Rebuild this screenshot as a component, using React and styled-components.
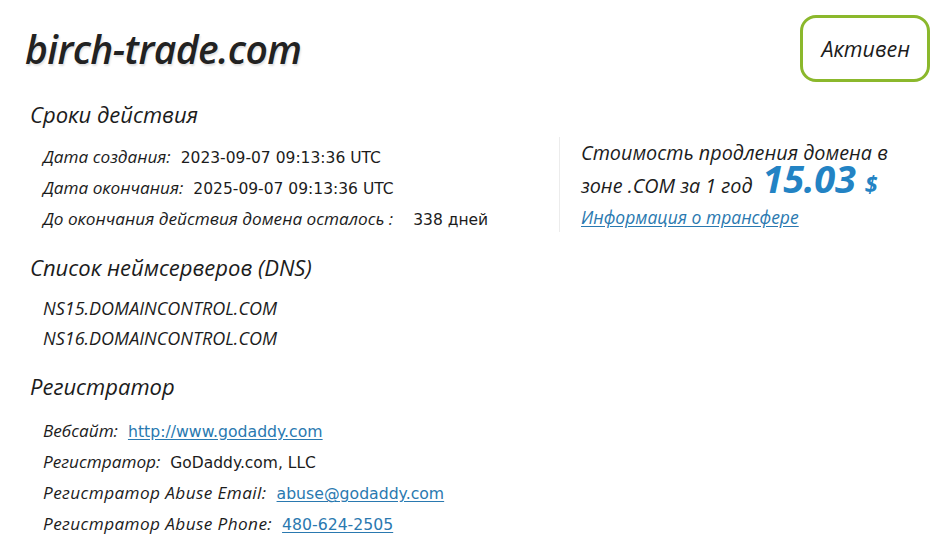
import React from "react";
import styled, { createGlobalStyle } from "styled-components";

const GlobalStyle = createGlobalStyle`
  html, body {
    margin: 0;
    padding: 0;
    background: #fff;
  }
  body {
    font-family: "Open Sans", "Noto Sans", sans-serif;
    color: #1c1c1c;
  }
`;

const Page = styled.div`
  width: 943px;
  height: 556px;
  box-sizing: border-box;
  padding: 15px 13px 0 25px;
  overflow: hidden;
`;

const Header = styled.header`
  display: flex;
  justify-content: space-between;
  align-items: center;
`;

const Title = styled.h1`
  margin: 0;
  font-size: 39px;
  line-height: 46px;
  font-style: italic;
  font-weight: 600;
  color: #222;
  letter-spacing: -0.6px;
  text-shadow: 1px 2px 2px rgba(0, 0, 0, 0.12);
`;

const Status = styled.div`
  box-sizing: border-box;
  height: 67px;
  padding: 0 17px 0 18px;
  display: flex;
  align-items: center;
  border: 3px solid #8bb82c;
  border-radius: 16px;
  font-size: 21.5px;
  font-style: italic;
  color: #1c1c1c;
`;

const TopRow = styled.div`
  display: flex;
  align-items: flex-start;
`;

const Section = styled.section`
  padding-left: 5px;
  margin-top: ${(p) => p.$top}px;
  width: ${(p) => (p.$wide ? "529px" : "auto")};
`;

const SectionTitle = styled.h2`
  margin: 0;
  font-size: 22px;
  line-height: 30px;
  font-style: italic;
  font-weight: 400;
  color: #1c1c1c;
`;

const List = styled.div`
  margin-top: ${(p) => p.$gap}px;
  padding-left: 13px;
`;

const Row = styled.div`
  display: flex;
  align-items: baseline;
  height: 31px;
  line-height: 31px;
  white-space: nowrap;
`;

const Label = styled.span`
  font-size: 17.2px;
  font-style: italic;
  margin-right: ${(p) => p.$gap || 10}px;
  letter-spacing: ${(p) => (p.$latin ? "0.4px" : "0")};
`;

const Value = styled.span`
  font-family: "DejaVu Sans", "Open Sans", sans-serif;
  font-size: 15.5px;
`;

const Server = styled.div`
  font-size: 18px;
  line-height: 30px;
  font-style: italic;
`;

const Anchor = styled.a`
  font-family: "DejaVu Sans", "Open Sans", sans-serif;
  font-size: 15.7px;
  color: #2a79b0;
  text-decoration: underline;
  text-underline-offset: 2px;
`;

const Aside = styled.aside`
  margin-top: 55px;
  height: 95px;
  border-left: 1px solid #ececec;
  padding: 0 0 0 21px;
  font-style: italic;
  font-size: 19.8px;
  line-height: 31px;
`;

const PriceLine = styled.div`
  display: flex;
  align-items: baseline;
  height: 29px;
  line-height: 29px;
  white-space: nowrap;
`;

const Price = styled.span`
  margin-left: 10px;
  font-size: 38px;
  line-height: 20px;
  font-weight: 700;
  color: #2383c4;
  letter-spacing: -0.3px;
`;

const Currency = styled.span`
  margin-left: 9px;
  font-size: 23px;
  line-height: 20px;
  font-weight: 700;
  color: #2383c4;
`;

const TransferLink = styled.a`
  display: block;
  margin-top: 8px;
  font-size: 17.5px;
  line-height: 24px;
  color: #2a79b0;
  text-decoration: underline;
  text-underline-offset: 2px;
`;

export default function App() {
  return (
    <>
      <GlobalStyle />
      <Page>
        <Header>
          <Title>birch-trade.com</Title>
          <Status>Активен</Status>
        </Header>

        <TopRow>
          <Section $top={17} $wide>
            <SectionTitle>Сроки действия</SectionTitle>
            <List $gap={12}>
              <Row>
                <Label>Дата создания:</Label>
                <Value>2023-09-07 09:13:36 UTC</Value>
              </Row>
              <Row>
                <Label>Дата окончания:</Label>
                <Value>2025-09-07 09:13:36 UTC</Value>
              </Row>
              <Row>
                <Label $gap={20}>До окончания действия домена осталось :</Label>
                <Value>338 дней</Value>
              </Row>
            </List>
          </Section>
          <Aside>
            <div>Стоимость продления домена в</div>
            <PriceLine>
              зоне .COM за 1 год
              <Price>15.03</Price>
              <Currency>$</Currency>
            </PriceLine>
            <TransferLink href="#">Информация о трансфере</TransferLink>
          </Aside>
        </TopRow>

        <Section $top={18}>
          <SectionTitle>Список неймсерверов (DNS)</SectionTitle>
          <List $gap={11}>
            <Server>NS15.DOMAINCONTROL.COM</Server>
            <Server>NS16.DOMAINCONTROL.COM</Server>
          </List>
        </Section>

        <Section $top={18}>
          <SectionTitle>Регистратор</SectionTitle>
          <List $gap={14}>
            <Row>
              <Label>Вебсайт:</Label>
              <Anchor href="#">http://www.godaddy.com</Anchor>
            </Row>
            <Row>
              <Label>Регистратор:</Label>
              <Value>GoDaddy.com, LLC</Value>
            </Row>
            <Row>
              <Label $latin>Регистратор Abuse Email:</Label>
              <Anchor href="#">abuse@godaddy.com</Anchor>
            </Row>
            <Row>
              <Label $latin>Регистратор Abuse Phone:</Label>
              <Anchor href="#">480-624-2505</Anchor>
            </Row>
          </List>
        </Section>
      </Page>
    </>
  );
}
